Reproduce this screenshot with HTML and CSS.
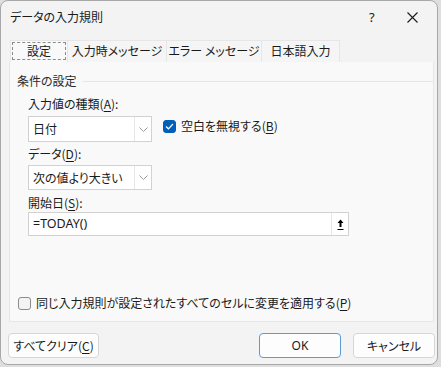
FILE: index.html
```html
<!DOCTYPE html>
<html lang="ja">
<head>
    <meta charset="UTF-8">
    <title>データの入力規則</title>
    <link rel="stylesheet" href="styles.css">
</head>
<body>
    <div class="dialog">
        <div class="titlebar">
            <span class="title">データの入力規則</span>
            <span class="help">?</span>
            <span class="close">
                <svg width="11" height="11" viewBox="0 0 11 11"><path d="M0.5 0.5 L10.5 10.5 M10.5 0.5 L0.5 10.5" stroke="#1a1a1a" stroke-width="1.1" fill="none"/></svg>
            </span>
        </div>

        <div class="tabs">
            <div class="tab active" style="width: 58px;"><span class="focus">設定</span></div>
            <div class="tab" style="width: 100px;">入力時メッセージ</div>
            <div class="tab" style="width: 96px;">エラー メッセージ</div>
            <div class="tab" style="width: 79px;">日本語入力</div>
        </div>

        <div class="panel">
            <div class="group-head">
                <span>条件の設定</span>
                <span class="group-line"></span>
            </div>

            <div class="group">
                <div class="label label-first">入力値の種類(<u>A</u>):</div>
                <div class="row">
                    <div class="combo">
                        <span class="combo-text">日付</span>
                        <span class="combo-btn">
                            <svg width="9" height="5" viewBox="0 0 9 5"><path d="M0.5 0.5 L4.5 4.5 L8.5 0.5" stroke="#9a9a9a" fill="none"/></svg>
                        </span>
                    </div>
                    <label class="check">
                        <span class="box checked">
                            <svg width="9" height="7" viewBox="0 0 9 7"><path d="M1 3.5 L3.4 5.8 L8 1" stroke="#fff" stroke-width="1.2" fill="none"/></svg>
                        </span>
                        <span>空白を無視する(<u>B</u>)</span>
                    </label>
                </div>

                <div class="label label-data">データ(<u>D</u>):</div>
                <div class="combo combo-data">
                    <span class="combo-text">次の値より大きい</span>
                    <span class="combo-btn">
                        <svg width="9" height="5" viewBox="0 0 9 5"><path d="M0.5 0.5 L4.5 4.5 L8.5 0.5" stroke="#9a9a9a" fill="none"/></svg>
                    </span>
                </div>

                <div class="label label-start">開始日(<u>S</u>):</div>
                <div class="field">
                    <span class="field-text">=TODAY()</span>
                    <span class="ref-btn">
                        <svg width="7" height="11" viewBox="0 0 7 11"><path d="M3.5 0.5 L6.5 4 L4.5 4 L4.5 8 L2.5 8 L2.5 4 L0.5 4 Z" fill="#000"/><path d="M0.5 10.5 L6.5 10.5" stroke="#000"/></svg>
                    </span>
                </div>
            </div>

            <label class="check check-bottom">
                <span class="box"></span>
                <span>同じ入力規則が設定されたすべてのセルに変更を適用する(<u>P</u>)</span>
            </label>
        </div>

        <div class="buttons">
            <button class="btn btn-clear">すべてクリア(<u>C</u>)</button>
            <span class="spacer"></span>
            <button class="btn btn-ok">OK</button>
            <button class="btn btn-cancel">キャンセル</button>
        </div>
    </div>
</body>
</html>
```

FILE: styles.css
```css
body {
    margin: 0;
    background-color: #dedede;
    font-family: "Noto Sans CJK JP", "Noto Sans", sans-serif;
    font-feature-settings: "palt";
    font-size: 12px;
    color: #1a1a1a;
}
u {
    text-decoration-thickness: 1px;
    text-underline-offset: 2px;
}
.dialog {
    width: 436px;
    height: 363px;
    border: 1px solid #a8a8a8;
    border-radius: 8px;
    background: #f3f3f3;
    overflow: hidden;
    display: flex;
    flex-direction: column;
}
.titlebar {
    height: 32px;
    display: flex;
    align-items: center;
    flex-shrink: 0;
}
.title {
    padding-left: 9px;
    line-height: 16px;
    flex: 1;
}
.help {
    font-family: "Noto Sans", sans-serif;
    font-size: 13px;
    width: 20px;
    margin-right: 18px;
}
.close {
    width: 22px;
    margin-right: 8px;
    display: flex;
}
.tabs {
    display: flex;
    margin: 7px 0 0 9px;
    height: 22px;
}
.tab {
    box-sizing: border-box;
    height: 22px;
    line-height: 20px;
    text-align: center;
    background: #f5f5f5;
    border: 1px solid #e6e6e6;
    border-bottom: none;
    margin-right: -1px;
}
.tab.active {
    background: #f9f9f9;
    padding: 1px;
    line-height: 16px;
}
.focus {
    display: block;
    height: 18px;
    border: 1px dashed #8c8c8c;
    box-sizing: border-box;
}
.panel {
    box-sizing: border-box;
    height: 260px;
    margin: 0 3px 0 8px;
    background: #f9f9f9;
    border: 1px solid #e6e6e6;
    border-top: none;
    padding: 11px 0 10px 7px;
    display: flex;
    flex-direction: column;
}
.group-head {
    display: flex;
    align-items: center;
    line-height: 16px;
    height: 16px;
    color: #2a2a2a;
}
.group-line {
    flex: 1;
    height: 1px;
    background: #e6e6e6;
    margin-left: 5px;
}
.group {
    padding-left: 11px;
}
.label {
    line-height: 16px;
    height: 16px;
}
.label-first {
    margin-top: 7px;
}
.label-data {
    margin-top: 4px;
}
.label-start {
    margin-top: 5px;
}
.row {
    display: flex;
    align-items: flex-start;
}
.combo {
    margin-top: 4px;
    width: 124px;
    height: 26px;
    box-sizing: border-box;
    background: #fff;
    border: 1px solid #d2d2d2;
    display: flex;
}
.combo-data {
    margin-top: 3px;
    height: 25px;
}
.combo-text {
    flex: 1;
    padding-left: 4px;
    line-height: 23px;
}
.combo-btn {
    width: 16px;
    border-left: 1px solid #e6e6e6;
    display: flex;
    align-items: center;
    justify-content: center;
}
.check {
    display: flex;
    align-items: center;
    gap: 5px;
    line-height: 16px;
}
.row .check {
    margin: 6px 0 0 11px;
}
.box {
    width: 13px;
    height: 13px;
    box-sizing: border-box;
    border: 1px solid #8a8a8a;
    border-radius: 3px;
    background: #f3f3f3;
    display: flex;
    align-items: center;
    justify-content: center;
}
.box.checked {
    background: #005fb8;
    border-color: #005fb8;
}
.field {
    margin-top: 1px;
    width: 321px;
    height: 24px;
    box-sizing: border-box;
    background: #fff;
    border: 1px solid #d2d2d2;
    display: flex;
}
.field-text {
    flex: 1;
    padding-left: 4px;
    line-height: 22px;
    font-family: "Noto Sans", sans-serif;
    font-size: 12.5px;
}
.ref-btn {
    width: 16px;
    border-left: 1px solid #e6e6e6;
    display: flex;
    align-items: center;
    justify-content: center;
}
.check-bottom {
    margin-top: auto;
    margin-left: 1px;
}
.buttons {
    display: flex;
    margin: 11px 0 0 7px;
    gap: 12px;
}
.btn {
    height: 25px;
    box-sizing: border-box;
    font-family: "Noto Sans CJK JP", "Noto Sans", sans-serif;
    font-feature-settings: "palt";
    font-size: 12px;
    color: #1a1a1a;
    background: #fdfdfd;
    border: 1px solid #d6d6d6;
    border-radius: 4px;
    padding: 0;
}
.btn-clear {
    width: 91px;
}
.spacer {
    flex: 1;
}
.btn-ok {
    width: 82px;
    border-color: #5b9ad6;
    font-family: "Noto Sans", sans-serif;
}
.btn-cancel {
    width: 82px;
    margin-right: 2px;
}
```
